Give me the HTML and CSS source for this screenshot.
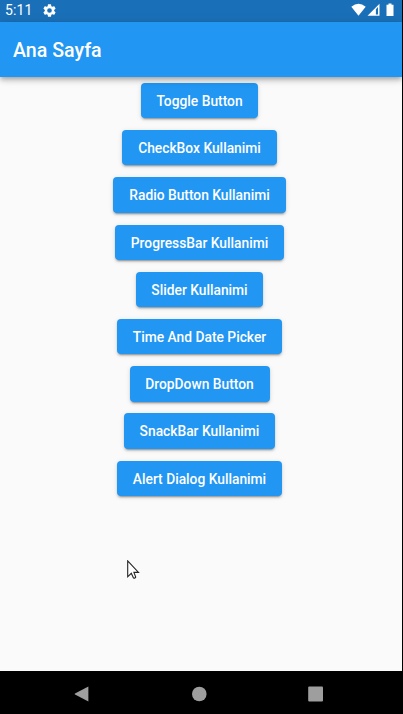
FILE: index.html
```html
<!DOCTYPE html>
<html lang="tr">
<head>
<meta charset="utf-8">
<title>Ana Sayfa</title>
<link rel="stylesheet" href="styles.css">
</head>
<body>
<div class="screen">
  <div class="status">
    <span class="clock">5:11</span>
    <svg class="gear" viewBox="2 2 20 20"><path fill="#fff" d="M19.14 12.94c.04-.3.06-.61.06-.94 0-.32-.02-.64-.07-.94l2.03-1.58a.49.49 0 0 0 .12-.61l-1.92-3.32a.49.49 0 0 0-.59-.22l-2.39.96c-.5-.38-1.03-.7-1.62-.94l-.36-2.54a.48.48 0 0 0-.48-.41h-3.84a.47.47 0 0 0-.47.41l-.36 2.54c-.59.24-1.13.57-1.62.94l-2.39-.96a.48.48 0 0 0-.59.22L2.74 8.87a.48.48 0 0 0 .12.61l2.03 1.58c-.05.3-.09.63-.09.94s.02.64.07.94l-2.03 1.58a.49.49 0 0 0-.12.61l1.92 3.32c.12.22.37.29.59.22l2.39-.96c.5.38 1.03.7 1.62.94l.36 2.54c.05.24.24.41.48.41h3.84c.24 0 .44-.17.47-.41l.36-2.54c.59-.24 1.13-.56 1.62-.94l2.39.96c.22.08.47 0 .59-.22l1.92-3.32a.47.47 0 0 0-.12-.61zM12 15.6A3.6 3.6 0 1 1 12 8.400a3.600 3.600 0 0 1 0 7.200z"/></svg>
    <svg class="indicators" viewBox="0 0 45 14">
      <path fill="#fff" d="M0.300 3.700Q7.500-2.200 14.700 3.700L7.500 12.700z"/>
      <path fill="#fff" d="M28.500 .7V12.700H16.500zM24.900 6.200V11.500H27V4z" fill-rule="evenodd"/>
      <path fill="#fff" d="M37.500.5h3v1.300h2V13h-7V1.800h2z"/>
    </svg>
  </div>
  <header class="appbar"><h1>Ana Sayfa</h1></header>
  <main class="content">
    <button>Toggle Button</button>
    <button>CheckBox Kullanimi</button>
    <button>Radio Button Kullanimi</button>
    <button>ProgressBar Kullanimi</button>
    <button>Slider Kullanimi</button>
    <button>Time And Date Picker</button>
    <button>DropDown Button</button>
    <button>SnackBar Kullanimi</button>
    <button>Alert Dialog Kullanimi</button>
  </main>
  <svg class="cursor" viewBox="0 0 14 20"><path fill="#fff" stroke="#222" stroke-width="1.100" d="M.7.900V16.800L4.300 13.300 6.500 18Q8.300 18.500 8.700 17L6.900 12.400H11.500z"/></svg>
</div>
<nav class="navbar">
  <svg viewBox="0 0 16 16"><path fill="#9e9e9e" d="M14.400.500V15.500L1 8.600Q.3 8 1 7.400z"/></svg>
  <svg viewBox="0 0 16 16"><circle cx="8.300" cy="8" r="7.300" fill="#9e9e9e"/></svg>
  <svg viewBox="0 0 16 16"><rect x=".2" y=".6" width="14.800" height="14.800" rx="1" fill="#9e9e9e"/></svg>
</nav>
</body>
</html>
```
FILE: styles.css
```css
* { box-sizing: border-box; }
body {
  margin: 0;
  height: 714px;
  overflow: hidden;
  background: #000;
  font-family: Roboto, sans-serif;
}
.screen {
  position: relative;
  width: 402px;
  height: 671px;
  background: #fafafa;
}
.status {
  display: flex;
  align-items: center;
  height: 22px;
  padding: 0 6px 2px 5px;
  background: #1a70b8;
  color: #fff;
}
.clock {
  width: 38px;
  font-size: 14px;
  line-height: 18px;
  letter-spacing: 0.1px;
}
.gear { width: 13px; height: 13px; }
.indicators { width: 45px; height: 14px; margin-left: auto; }
.appbar {
  position: relative;
  display: flex;
  align-items: center;
  height: 55px;
  padding: 1px 0 0 13px;
  background: #2196f3;
  color: #fff;
  box-shadow: 0 2px 4px -1px rgba(0,0,0,.2), 0 4px 5px rgba(0,0,0,.14), 0 1px 10px rgba(0,0,0,.12);
}
h1 {
  margin: 0;
  font-size: 19.6px;
  font-weight: 500;
  letter-spacing: 0;
}
.content {
  display: flex;
  flex-direction: column;
  align-items: center;
  gap: 11.85px;
  width: 399px;
  padding-top: 5.800px;
}
button {
  height: 35.4px;
  padding: 1px 15.8px 0;
  border: 0;
  border-radius: 4px;
  background: #2196f3;
  color: #fff;
  font: 500 13.8px/34.4px Roboto, sans-serif;
  letter-spacing: 0;
  white-space: nowrap;
  box-shadow: 0 3px 1px -2px rgba(0,0,0,.2), 0 2px 2px rgba(0,0,0,.14), 0 1px 5px rgba(0,0,0,.12);
}
.cursor {
  position: absolute;
  left: 127px;
  top: 560px;
  width: 14px;
  height: 20px;
}
.navbar {
  display: flex;
  align-items: center;
  gap: 101px;
  height: 43px;
  padding: 3px 0 0 74px;
}
.navbar svg { width: 16px; height: 16px; }
```
